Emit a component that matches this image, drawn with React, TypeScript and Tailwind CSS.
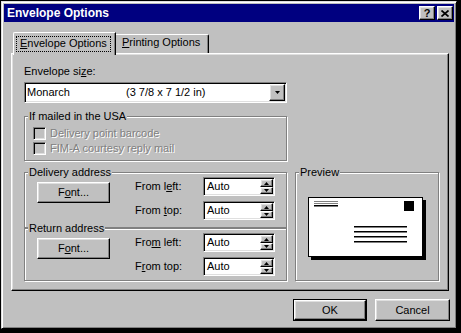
import type { ReactNode } from 'react';

const raised =
  'border border-t-white border-l-white border-r-black border-b-black shadow-[inset_-1px_-1px_0_#808080,inset_1px_1px_0_#dfdfdf]';
const sunken =
  'border border-t-[#808080] border-l-[#808080] border-r-white border-b-white shadow-[inset_1px_1px_0_#000,inset_-1px_-1px_0_#dfdfdf]';
const etched = 'border border-[#808080] shadow-[inset_1px_1px_0_#fff,1px_1px_0_#fff]';

function Group({ label, className, children }: { label: string; className: string; children?: ReactNode }) {
  return (
    <div className={`relative ${etched} ${className}`}>
      <span className="absolute left-[3px] top-[-7px] bg-[#c0c0c0] px-[1px]">{label}</span>
      {children}
    </div>
  );
}

function Arrow({ up }: { up?: boolean }) {
  return (
    <svg width="5" height="3" viewBox="0 0 5 3">
      <path d={up ? 'M2.5 0 L5 3 L0 3 Z' : 'M0 0 L5 0 L2.5 3 Z'} fill="#000" />
    </svg>
  );
}

function Spin() {
  return (
    <div className={`flex h-[19px] w-[72px] bg-white ${sunken}`}>
      <span className="flex-1 pl-[3px] leading-[17px]">Auto</span>
      <div className="flex flex-col py-[1px] pr-[1px]">
        <div className={`flex h-[8px] w-[13px] items-center justify-center bg-[#c0c0c0] ${raised}`}>
          <Arrow up />
        </div>
        <div className={`flex h-[7px] w-[13px] items-center justify-center bg-[#c0c0c0] ${raised}`}>
          <Arrow />
        </div>
      </div>
    </div>
  );
}

function Checkbox({ children }: { children: ReactNode }) {
  return (
    <div className="flex h-[13px] items-center">
      <div className={`h-[13px] w-[13px] bg-[#c0c0c0] ${sunken}`} />
      <span className="ml-[4px] text-[#808080] [text-shadow:1px_1px_0_#fff]">{children}</span>
    </div>
  );
}

function AddressGroup({ label, h, left, top }: { label: string; h: string; left: ReactNode; top: ReactNode }) {
  return (
    <Group label={label} className={`flex pl-[12px] pt-[4px] ${h}`}>
      <button className={`mt-[5px] h-[21px] w-[73px] bg-[#c0c0c0] ${raised}`}>
        F<u>o</u>nt...
      </button>
      <div className="ml-[25px] flex flex-col gap-[5px]">
        <div className="flex items-center">
          <span className="w-[68px]">{left}</span>
          <Spin />
        </div>
        <div className="flex items-center">
          <span className="w-[68px]">{top}</span>
          <Spin />
        </div>
      </div>
    </Group>
  );
}

function EnvelopePreview() {
  return (
    <svg width="118" height="63" viewBox="0 0 118 63" className="mt-[4px]">
      <rect x="3" y="3" width="115" height="60" fill="#000" />
      <rect x="0.5" y="0.5" width="114" height="59" fill="#fff" stroke="#000" />
      <rect x="6" y="4" width="24" height="1" fill="#808080" />
      <rect x="6" y="6" width="24" height="1" fill="#808080" />
      <rect x="6" y="8" width="24" height="1.5" fill="#000" />
      <rect x="96" y="4" width="10" height="10" fill="#000" />
      {[29, 34, 39, 44].map((y) => (
        <g key={y}>
          <rect x="46" y={y} width="53" height="1" fill="#000" />
          <rect x="46" y={y + 1} width="53" height="1" fill="#808080" />
        </g>
      ))}
    </svg>
  );
}

export default function App() {
  return (
    <div className="h-[333px] w-[461px] bg-black pl-[1px] pt-[1px] font-['Liberation_Sans',Arial,sans-serif] text-[11px] leading-[13px] text-black">
      <div className="flex h-[328px] w-[456px] flex-col border border-t-[#dfdfdf] border-l-[#dfdfdf] border-r-black border-b-black bg-[#c0c0c0] p-[2px] shadow-[inset_1px_1px_0_#fff,inset_-1px_-1px_0_#808080]">
        {/* Title bar */}
        <div className="flex h-[18px] items-center justify-between bg-[#000080] pl-[3px] pr-[1px]">
          <span className="text-[12px] font-bold text-white">Envelope Options</span>
          <div className="flex gap-[2px]">
            <div className={`flex h-[14px] w-[16px] items-center justify-center bg-[#c0c0c0] text-[11px] font-bold leading-none ${raised}`}>
              ?
            </div>
            <div className={`flex h-[14px] w-[16px] items-center justify-center bg-[#c0c0c0] ${raised}`}>
              <svg width="8" height="7" viewBox="0 0 8 7">
                <path d="M0.5 0.5 L7.5 6.5 M7.5 0.5 L0.5 6.5" stroke="#000" strokeWidth="1.7" />
              </svg>
            </div>
          </div>
        </div>

        <div className="flex flex-col pl-[7px] pr-[5px] pt-[10px]">
          {/* Tabs */}
          <div className="flex items-end">
            <div className="relative z-10 -mb-[2px] ml-[2px] h-[23px] w-[103px] rounded-tl-[2px] border-l border-t border-r border-l-white border-t-white border-r-black bg-[#c0c0c0] pl-[2px] pt-[3px] shadow-[inset_-1px_0_0_#808080]">
              <span className="inline-block border border-dotted border-black px-[3px] pb-[1px]">
                <u>E</u>nvelope Options
              </span>
            </div>
            <div className="h-[19px] w-[93px] rounded-tr-[2px] border-t border-r border-t-white border-r-black pl-[6px] pt-[1px] shadow-[inset_-1px_0_0_#808080]">
              <u>P</u>rinting Options
            </div>
          </div>

          {/* Panel */}
          <div className="flex w-[438px] border border-t-white border-l-white border-r-black border-b-black pb-[9px] pl-[12px] pr-[9px] pt-[11px] shadow-[inset_-1px_-1px_0_#808080,inset_1px_1px_0_#dfdfdf]">
            <div className="flex w-[263px] flex-col">
              <span>
                Envelope si<u>z</u>e:
              </span>
              <div className={`mt-[4px] flex h-[21px] items-center bg-white ${sunken}`}>
                <span className="w-[101px] pl-[2px]">Monarch</span>
                <span className="flex-1">(3 7/8 x 7 1/2 in)</span>
                <div className="flex h-full items-center py-[1px] pr-[1px]">
                  <div className={`flex h-[17px] w-[16px] items-center justify-center bg-[#c0c0c0] ${raised}`}>
                    <Arrow />
                  </div>
                </div>
              </div>

              <Group label="If mailed in the USA" className="mt-[13px] flex h-[45px] flex-col gap-[2px] pl-[8px] pt-[10px]">
                <Checkbox>Delivery point barcode</Checkbox>
                <Checkbox>FIM-A courtesy reply mail</Checkbox>
              </Group>

              <div className="mt-[11px] flex flex-col">
                <AddressGroup
                  label="Delivery address"
                  h="h-[56px]"
                  left={
                    <>
                      From l<u>e</u>ft:
                    </>
                  }
                  top={
                    <>
                      From <u>t</u>op:
                    </>
                  }
                />
                <AddressGroup
                  label="Return address"
                  h="h-[53px]"
                  left={
                    <>
                      Fro<u>m</u> left:
                    </>
                  }
                  top={
                    <>
                      F<u>r</u>om top:
                    </>
                  }
                />
              </div>
            </div>

            <div className="ml-[8px] flex w-[144px] flex-col justify-end">
              <Group label="Preview" className="flex h-[109px] items-center justify-center">
                <EnvelopePreview />
              </Group>
            </div>
          </div>

          {/* Buttons */}
          <div className="-mr-[1px] mt-[8px] flex justify-end gap-[8px]">
            <div className="h-[22px] w-[74px] border border-black">
              <button className={`h-full w-full bg-[#c0c0c0] ${raised}`}>OK</button>
            </div>
            <button className={`h-[22px] w-[75px] bg-[#c0c0c0] ${raised}`}>Cancel</button>
          </div>
        </div>
      </div>
    </div>
  );
}
